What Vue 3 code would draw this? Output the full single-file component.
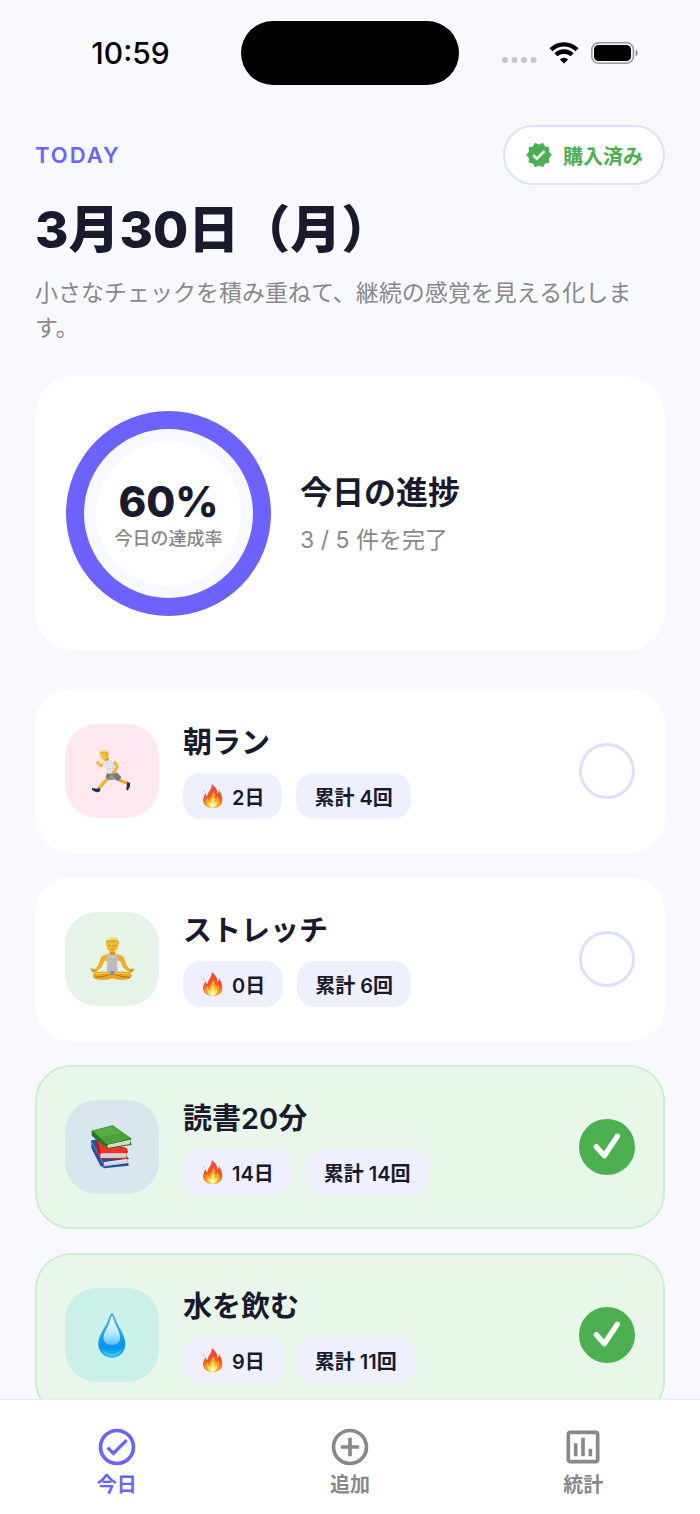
<template>
  <div class="app">
    <header class="status-bar">
      <time class="clock">10:59</time>
      <div class="island"></div>
      <div class="status-icons">
        <svg width="35" height="22" viewBox="0 0 35 22" fill="#c6c7cc">
          <rect x="0" y="15" width="6" height="6" rx="2.4" />
          <rect x="9.5" y="15" width="6" height="6" rx="2.4" />
          <rect x="19" y="15" width="6" height="6" rx="2.4" />
          <rect x="28.5" y="15" width="6" height="6" rx="2.4" />
        </svg>
        <svg width="30" height="22" viewBox="0 0 30 22">
          <g fill="none" stroke="#000" stroke-width="4.4">
            <path d="M2 7.8A18.4 18.4 0 0 1 28 7.8" />
            <path d="M6.9 12.8A11.5 11.5 0 0 1 23.1 12.8" />
          </g>
          <path d="M15 21.6l-4.1-4.2a5.9 5.9 0 0 1 8.2 0z" />
        </svg>
        <svg width="47" height="22" viewBox="0 0 47 22">
          <rect x="0.8" y="0.8" width="41.6" height="20.4" rx="6.6" fill="none" stroke="#97989c" stroke-width="1.5" />
          <rect x="3" y="3" width="37" height="16" rx="4.6" />
          <path d="M44.6 7.8c2.6 1.2 2.6 5.2 0 6.4z" fill="#88898d" />
        </svg>
      </div>
    </header>

    <main class="content">
      <div class="top-row">
        <span class="eyebrow">TODAY</span>
        <button type="button" class="purchased">
          <svg width="28" height="28" viewBox="0 0 24 24" fill="currentColor">
            <path d="M23 12l-2.44-2.79.34-3.69-3.61-.82-1.89-3.2L12 2.96 8.6 1.5 6.71 4.69 3.1 5.5l.34 3.7L1 12l2.44 2.79-.34 3.7 3.61.82L8.6 22.5l3.4-1.47 3.4 1.46 1.89-3.19 3.61-.82-.34-3.69L23 12zm-12.91 4.72l-3.8-3.81 1.48-1.48 2.32 2.33 5.85-5.87 1.48 1.48-7.33 7.35z" />
          </svg>
          購入済み
        </button>
      </div>
      <h1 class="date">3月30日（月）</h1>
      <p class="lead">小さなチェックを積み重ねて、継続の感覚を見える化します。</p>

      <section class="progress-card">
        <div class="ring">
          <div class="ring-inner">
            <strong class="rate">{{ rate }}%</strong>
            <span class="rate-label">今日の達成率</span>
          </div>
        </div>
        <div>
          <h2 class="progress-title">今日の進捗</h2>
          <p class="progress-count">{{ completed }} / {{ total }} 件を完了</p>
        </div>
      </section>

      <ul class="habits">
        <li v-for="habit in habits" :key="habit.id" class="habit" :class="{ done: habit.done }">
          <div class="tile" :class="habit.id">
            <!-- ランナー -->
            <svg v-if="habit.id === 'run'" width="48" height="48" viewBox="0 0 144 144">
              <path d="M60 94L48 106 33 123" fill="none" stroke="#f5b322" stroke-width="10" stroke-linecap="round" stroke-linejoin="round" />
              <path d="M88 96l14 7 16 5" fill="none" stroke="#f2a91d" stroke-width="9" stroke-linecap="round" />
              <path d="M12 123l14 2 8-2 4 6-5 6-8 1-13-7z" fill="#1d2b66" />
              <path d="M117 106l9 1 0 11-6 12-5-1z" fill="#1d2b66" />
              <path d="M50 44L39 58 31 50" fill="none" stroke="#f5b322" stroke-width="7" stroke-linecap="round" stroke-linejoin="round" />
              <circle cx="30" cy="48" r="6" fill="#f7bd35" />
              <path d="M57 77l30-1 13 15-7 11-16-5-11 3-13-8z" fill="#777a7d" />
              <path d="M70 82l14 13-7 2-11 3-6-5z" fill="#929496" />
              <path d="M45 42q13-9 38 2l-5 15 9 18-28 4-6-20-10-5z" fill="#dfe3e6" />
              <path d="M78 44l6 2-6 14 5 14-8-9z" fill="#c6cbcf" />
              <path d="M81 46l7 14-10 16" fill="none" stroke="#f5b322" stroke-width="8" stroke-linecap="round" stroke-linejoin="round" />
              <circle cx="77" cy="76" r="5" fill="#f0a51d" />
              <path d="M49 31h13v8l-6 3-9-3z" fill="#dc9219" />
              <path d="M37 19q11-10 22 0l1 12q-5 8-14 7-7-1-8-8z" fill="#f9c23c" />
              <path d="M36 21q-1-10 11-11 14 0 15 11l-2 10-6-3-2-8-8 1z" fill="#eaae2b" />
              <path d="M40 13l8-3 9 4-14 2z" fill="#ffdc69" />
            </svg>
            <!-- ヨガ -->
            <svg v-else-if="habit.id === 'stretch'" width="48" height="48" viewBox="0 0 144 144">
              <path d="M65 43h16v12l11 6H53l12-6z" fill="#dc951b" />
              <path d="M50 60l10-4-2 22-9 1-9 19-18 15-8-5 16-16 9-25q2-5 11-7zM96 60l-10-4 2 22 9 1 9 19 18 15 8-5-16-16-9-25q-2-5-11-7z" fill="#efae25" />
              <path d="M55 60l8-4q10 9 20 0l8 4-4 24 3 31H55l3-31z" fill="#b9bbc0" />
              <path d="M63 61q10 12 20 0" fill="none" stroke="#d5d6da" stroke-width="3" />
              <path d="M19 113q28-7 54 1 26-8 54-1 10 12-3 18-26 8-51-1-25 9-52 1-12-6-2-18z" fill="#eba522" />
              <path d="M22 127q25 0 46-10m57 10q-24 0-46-10" fill="none" stroke="#b96c14" stroke-width="3" />
              <path d="M24 117q20-5 43-1m13 0q20-4 42 1" fill="none" stroke="#ffcf4e" stroke-width="3" />
              <path d="M69 108h9l3 8-8 5-8-5z" fill="#8b8c90" />
              <path d="M6 101l12 0 6 9-10 3zM140 101l-12 0-6 9 10 3z" fill="#dc9a24" />
              <ellipse cx="73" cy="31" rx="18" ry="21" fill="#f8bd32" />
              <path d="M54 31q-3-24 19-25 21 0 20 25l-5-9-12 2-13-3-5 3z" fill="#e2a93c" />
              <path d="M56 17q3-10 17-11 14 1 17 11-17-7-34 0z" fill="#f8dfa0" />
              <path d="M61 32q4 2 8 0m8 0q4 2 8 0M67 42q6 4 12 0" fill="none" stroke="#a8601a" stroke-width="2" />
              <path d="M73 31v6" stroke="#d68c18" stroke-width="3" />
            </svg>
            <!-- 本 -->
            <svg v-else-if="habit.id === 'read'" width="48" height="48" viewBox="0 0 144 144">
              <path d="M10 52l18-3 95 57-4 4 3 18-73 8-12-8-27-53z" fill="#294e9e" />
              <path d="M46 118l72-11 2 13-71 10z" fill="#e5e6e8" />
              <path d="M48 124l69-10M49 128l70-9" stroke="#aeb5c3" stroke-width="1.5" />
              <path d="M10 54l35 66 3 13" fill="none" stroke="#5275c3" stroke-width="4" />
              <path d="M25 54l91 21 4 12-5 5 2 16-80-1-9-16z" fill="#cf1d1c" />
              <path d="M31 57l84 22-3 12-75-1z" fill="#ee342a" />
              <path d="M35 91h79l1 13-78 1q-5-7-2-14z" fill="#e7e2dc" />
              <path d="M37 96h77M37 101h77" stroke="#b2aaa5" stroke-width="1.5" />
              <path d="M28 61l8 29-1 15" fill="none" stroke="#9f1317" stroke-width="3" />
              <path d="M11 23L74 7l57 40-4 5 4 14-72 11-48-39z" fill="#287820" />
              <path d="M13 23L74 8l55 39-72 17z" fill="#4ba33b" />
              <path d="M17 23L74 10l27 19-65 14z" fill="#63b44e" opacity=".55" />
              <path d="M60 65l68-15-3 13-65 11q-4-4 0-9z" fill="#ededeb" />
              <path d="M60 69l65-14M61 72l64-12" stroke="#aeb1ad" stroke-width="1.5" />
            </svg>
            <!-- しずく -->
            <svg v-else width="48" height="48" viewBox="0 0 144 144">
              <defs>
                <linearGradient id="drop-body" x1="0" y1="0" x2="0" y2="1">
                  <stop offset="0" stop-color="#5aaed0" />
                  <stop offset="0.35" stop-color="#2ba5e5" />
                  <stop offset="0.75" stop-color="#0d91e9" />
                  <stop offset="1" stop-color="#23bdf5" />
                </linearGradient>
                <linearGradient id="drop-shine" x1="0" y1="0" x2="0" y2="1">
                  <stop offset="0" stop-color="#e9faff" />
                  <stop offset="0.6" stop-color="#bcebff" />
                  <stop offset="1" stop-color="#51c0fb" />
                </linearGradient>
              </defs>
              <path d="M72 7c4 0 7 9 10 17 10 27 30 48 30 74 0 25-18 42-40 42S31 123 31 98c0-26 21-47 31-74 3-8 6-17 10-17z" fill="url(#drop-body)" />
              <path d="M72 13c4 10 7 21 14 34 8 17 12 27 10 38-2 12-12 17-24 17s-23-5-25-17c-2-11 4-23 12-38 6-13 9-24 13-34z" fill="url(#drop-shine)" />
              <path d="M42 116q29 24 60 0-10 20-30 20t-30-20z" fill="#45d0fb" opacity=".7" />
            </svg>
          </div>

          <div class="habit-body">
            <h3 class="habit-name">{{ habit.name }}</h3>
            <div class="chips">
              <span class="chip">
                <svg width="22" height="24" viewBox="0 0 66 72">
                  <defs>
                    <linearGradient :id="'flame-' + habit.id" x1="0" y1="0" x2="0" y2="1">
                      <stop offset="0" stop-color="#f5432c" />
                      <stop offset="0.55" stop-color="#fb512a" />
                      <stop offset="1" stop-color="#ffa322" />
                    </linearGradient>
                  </defs>
                  <path d="M32 0c4 4 17 13 18 29 3-2 4-7 4-11 6 10 10 20 10 30 0 14-11 24-29 24S6 62 6 49c0-9 4-15 8-22 1 4 2 8 5 10 1-14 15-20 13-37z" :fill="'url(#flame-' + habit.id + ')'" />
                  <path d="M12 17q-3 4-4 8l-2-1q1-5 6-7z" fill="#ff7555" />
                  <path d="M36 22c8 8 6 17 8 22 3-2 4-5 5-9 6 10 8 17 4 25-4 9-12 11-18 11-13 0-22-7-21-18 1-6 3-9 5-12 2 4 3 7 6 8 0-12 12-15 11-27z" fill="#ffa52b" />
                  <path d="M37 40c5 7 3 11 6 15 2-1 3-3 4-5 4 13-2 21-12 21-11 0-17-7-13-18 2 4 3 5 5 5 1-8 9-11 10-18z" fill="#ffe564" />
                  <path d="M35 56q9 6 6 12-7 6-13 0-2-6 7-12z" fill="#fff9bb" />
                </svg>
                {{ habit.streak }}日
              </span>
              <span class="chip">累計 {{ habit.count }}回</span>
            </div>
          </div>

          <button
            type="button"
            class="check"
            :aria-label="habit.name"
            :aria-pressed="habit.done"
            @click="toggle(habit)"
          >
            <svg v-if="habit.done" width="56" height="56" viewBox="0 0 168 168">
              <path d="M52 83l24 27 39-58" fill="none" stroke="#fff" stroke-width="16" stroke-linecap="round" stroke-linejoin="round" />
            </svg>
          </button>
        </li>
      </ul>
    </main>

    <nav class="tab-bar">
      <a
        v-for="tab in tabs"
        :key="tab.id"
        :href="'#' + tab.id"
        class="tab"
        :class="{ active: tab.id === activeTab }"
        @click.prevent="activeTab = tab.id"
      >
        <svg width="44" height="44" viewBox="0 0 24 24" fill="currentColor">
          <path :d="tab.icon" />
        </svg>
        {{ tab.label }}
      </a>
    </nav>
  </div>
</template>

<script setup>
import { ref, computed } from 'vue'

const habits = ref([
  { id: 'run', name: '朝ラン', streak: 2, count: 4, done: false },
  { id: 'stretch', name: 'ストレッチ', streak: 0, count: 6, done: false },
  { id: 'read', name: '読書20分', streak: 14, count: 14, done: true },
  { id: 'water', name: '水を飲む', streak: 9, count: 11, done: true }
])

const completed = ref(3)
const total = ref(5)
const rate = computed(() => Math.round((completed.value / total.value) * 100))

const toggle = (habit) => {
  habit.done = !habit.done
  completed.value += habit.done ? 1 : -1
}

const activeTab = ref('today')

const tabs = [
  {
    id: 'today',
    label: '今日',
    icon: 'M12 2C6.48 2 2 6.48 2 12s4.48 10 10 10 10-4.48 10-10S17.52 2 12 2zm0 18c-4.41 0-8-3.59-8-8s3.59-8 8-8 8 3.59 8 8-3.59 8-8 8zm4.6-12.4L10 14.2l-2.5-2.5-1.3 1.3 3.8 3.8 7.9-7.9z'
  },
  {
    id: 'add',
    label: '追加',
    icon: 'M13 7h-2v4H7v2h4v4h2v-4h4v-2h-4V7zm-1-5C6.48 2 2 6.48 2 12s4.48 10 10 10 10-4.48 10-10S17.52 2 12 2zm0 18c-4.41 0-8-3.59-8-8s3.59-8 8-8 8 3.59 8 8-3.59 8-8 8z'
  },
  {
    id: 'stats',
    label: '統計',
    icon: 'M9 17H7v-7h2v7zm4 0h-2V7h2v10zm4 0h-2v-4h2v4zm2 2H5V5h14v14zm0-16H5c-1.1 0-2 .9-2 2v14c0 1.1.9 2 2 2h14c1.1 0 2-.9 2-2V5c0-1.1-.9-2-2-2z'
  }
]
</script>

<style>
body {
  margin: 0;
  background: #f8f9ff;
}
</style>

<style scoped>
.app {
  display: flex;
  flex-direction: column;
  height: 100vh;
  background: #f8f9ff;
  color: #1a1a2e;
  font-family: Inter, "Noto Sans CJK JP", sans-serif;
}

h1,
h2,
h3,
p,
ul {
  margin: 0;
  padding: 0;
}

button {
  font-family: inherit;
  cursor: pointer;
}

svg {
  display: block;
  flex-shrink: 0;
}

.status-bar {
  display: grid;
  grid-template-columns: 1fr 218px 1fr;
  align-items: center;
  flex-shrink: 0;
  height: 106px;
  padding: 0 20px;
  color: #000;
}

.clock {
  text-align: center;
  font-size: 30px;
  font-weight: 500;
}

.island {
  height: 64px;
  border-radius: 32px;
  background: #000;
}

.status-icons {
  display: flex;
  justify-content: center;
  gap: 12px;
}

.content {
  flex: 1;
  min-height: 0;
  padding: 19px 35px 24px;
  overflow-y: auto;
  scrollbar-width: none;
}

.top-row {
  display: flex;
  align-items: center;
  justify-content: space-between;
}

.eyebrow {
  color: #6c63ff;
  font-size: 22px;
  font-weight: 600;
  letter-spacing: 2px;
}

.purchased {
  display: flex;
  align-items: center;
  gap: 10px;
  height: 60px;
  padding: 0 20px;
  border: 2px solid #dde1fa;
  border-radius: 30px;
  background: #fff;
  color: #4caf50;
  font-size: 20px;
  font-weight: 700;
}

.date {
  margin-top: 15px;
  font-size: 51px;
  font-weight: 800;
  line-height: 60px;
}

.lead {
  margin-top: 16px;
  color: #888;
  font-size: 23px;
  line-height: 35px;
}

.progress-card {
  display: flex;
  align-items: center;
  gap: 29px;
  margin-top: 30px;
  padding: 35px 31px;
  border-radius: 40px;
  background: #fff;
}

.ring {
  box-sizing: border-box;
  flex-shrink: 0;
  width: 205px;
  height: 205px;
  padding: 12px;
  border: 18px solid #6c63ff;
  border-radius: 50%;
  background: #f8f9ff;
}

.ring-inner {
  box-sizing: border-box;
  display: flex;
  flex-direction: column;
  align-items: center;
  justify-content: center;
  height: 100%;
  padding-top: 4px;
  border-radius: 50%;
  background: #fff;
}

.rate {
  font-size: 42px;
  font-weight: 800;
  line-height: 46px;
}

.rate-label {
  color: #888;
  font-size: 18px;
  font-weight: 500;
  line-height: 28px;
  white-space: nowrap;
}

.progress-title {
  font-size: 32px;
  font-weight: 700;
  line-height: 48px;
}

.progress-count {
  margin-top: 6px;
  color: #888;
  font-size: 23px;
  line-height: 35px;
}

.habits {
  display: flex;
  flex-direction: column;
  gap: 24px;
  margin-top: 38px;
  list-style: none;
}

.habit {
  display: flex;
  align-items: center;
  gap: 24px;
  padding: 32px 28px;
  border: 2px solid #fff;
  border-radius: 36px;
  background: #fff;
}

.habit.done {
  border-color: #ceeed1;
  background: #e8f7ea;
}

.tile {
  display: flex;
  align-items: center;
  justify-content: center;
  flex-shrink: 0;
  width: 94px;
  height: 94px;
  border-radius: 32px;
}

.tile.run {
  background: #ffe9ee;
}

.tile.stretch {
  background: #e6f4e8;
}

.tile.read {
  background: #d8e7ed;
}

.tile.water {
  background: #cbefe9;
}

.habit-body {
  flex: 1;
  min-width: 0;
}

.habit-name {
  font-size: 29px;
  font-weight: 600;
  line-height: 40px;
}

.chips {
  display: flex;
  flex-wrap: wrap;
  gap: 14px;
  margin-top: 10px;
}

.chip {
  display: flex;
  align-items: center;
  gap: 9px;
  height: 46px;
  padding: 0 18px;
  border-radius: 18px;
  background: #eef0ff;
  font-size: 20px;
  font-weight: 600;
  white-space: nowrap;
}

.check {
  box-sizing: border-box;
  display: flex;
  align-items: center;
  justify-content: center;
  flex-shrink: 0;
  width: 56px;
  height: 56px;
  padding: 0;
  border: 3px solid #dde1fa;
  border-radius: 50%;
  background: #fff;
}

.done .check {
  border-color: #4caf50;
  background: #4caf50;
}

.tab-bar {
  display: flex;
  flex-shrink: 0;
  height: 114px;
  border-top: 1px solid #e8eaf6;
  background: #fff;
}

.tab {
  display: flex;
  flex: 1;
  flex-direction: column;
  align-items: center;
  padding-top: 25px;
  color: #888;
  font-size: 20px;
  font-weight: 600;
  line-height: 32px;
  text-decoration: none;
}

.tab.active {
  color: #6c63ff;
}
</style>
